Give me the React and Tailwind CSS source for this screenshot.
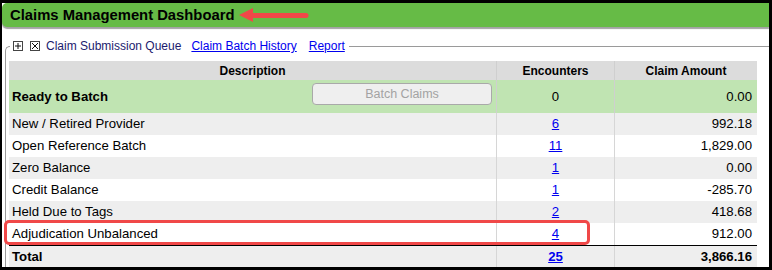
import React from "react";

const rows = [
  { label: "New / Retired Provider", count: "6", amount: "992.18", shade: true },
  { label: "Open Reference Batch", count: "11", amount: "1,829.00", shade: false },
  { label: "Zero Balance", count: "1", amount: "0.00", shade: true },
  { label: "Credit Balance", count: "1", amount: "-285.70", shade: false },
  { label: "Held Due to Tags", count: "2", amount: "418.68", shade: true },
  { label: "Adjudication Unbalanced", count: "4", amount: "912.00", shade: false },
];

const PlusBox = () => (
  <svg width="10" height="10" viewBox="0 0 10 10" className="shrink-0">
    <rect x="0.5" y="0.5" width="9" height="9" fill="white" stroke="#444" />
    <path d="M2 5h6M5 2v6" stroke="#111" strokeWidth="1" />
  </svg>
);

const CrossBox = () => (
  <svg width="10" height="10" viewBox="0 0 10 10" className="shrink-0">
    <rect x="0.5" y="0.5" width="9" height="9" fill="white" stroke="#444" />
    <path d="M2 2l6 6M8 2l-6 6" stroke="#111" strokeWidth="1" />
  </svg>
);

const Arrow = () => (
  <svg width="72" height="16" viewBox="0 0 72 16" className="ml-[4px] shrink-0">
    <path d="M1 8L15 1V15Z" fill="#f04848" />
    <path d="M13 8.5H68" stroke="#f04848" strokeWidth="5" strokeLinecap="round" />
  </svg>
);

export default function App() {
  return (
    <div className="w-[772px] h-[270px] overflow-hidden bg-white border-t-[3px] border-l-2 border-r-[3px] border-b-[3px] border-black font-['Liberation_Sans',Arial,sans-serif] text-black">
      <div className="h-[24px] bg-[#66bb46] rounded-l-[5px] shadow-[0_2px_1px_#a3a3a3] flex items-center pl-2">
        <h1 className="text-[14.8px] font-bold leading-none">Claims Management Dashboard</h1>
        <Arrow />
      </div>

      <fieldset className="mt-[12px] ml-[3px] min-w-0 border-t border-l border-[#9a9a9a] rounded-tl-[5px]">
        <legend className="ml-[4px] pl-[3px] pr-[4px]">
          <span className="flex items-center h-[14px] text-[12px] leading-none">
            <PlusBox />
            <span className="ml-[7px]">
              <CrossBox />
            </span>
            <span className="ml-[6px] text-[#1b1b6e]">Claim Submission Queue</span>
            <a href="#" className="ml-[10px] text-[#0000ee] underline">
              Claim Batch History
            </a>
            <a href="#" className="ml-[12px] text-[#0000ee] underline">
              Report
            </a>
          </span>
        </legend>

        <div className="relative mt-[8px] ml-[3px] w-[748px] text-[13.2px]">
          <div className="grid grid-cols-[487px_118px_143px] h-[19px] bg-[#dcdcdc] text-[12px] font-bold">
            <div className="flex items-center justify-center">Description</div>
            <div className="flex items-center justify-center border-l border-[#cfcfcf]">Encounters</div>
            <div className="flex items-center justify-center border-l border-[#cfcfcf]">Claim Amount</div>
          </div>

          <div className="grid grid-cols-[487px_118px_143px] h-[33px] bg-[#c0e4b2]">
            <div className="flex items-center justify-between pl-[3px] pr-[4px]">
              <span className="font-bold">Ready to Batch</span>
              <button
                disabled
                className="w-[180px] h-[22px] mb-[5px] rounded-[4px] border border-[#a9a9a9] bg-[#efefef] text-[12.5px] text-[#a3a3a3]"
              >
                Batch Claims
              </button>
            </div>
            <div className="flex items-center justify-center border-l border-[#cfcfcf]">0</div>
            <div className="flex items-center justify-end pr-[5px] border-l border-[#cfcfcf]">0.00</div>
          </div>

          {rows.map((r) => (
            <div
              key={r.label}
              className={`grid grid-cols-[487px_118px_143px] h-[22px] ${r.shade ? "bg-[#eeeeee]" : "bg-white"}`}
            >
              <div className="flex items-center pl-[3px]">{r.label}</div>
              <div className="flex items-center justify-center border-l border-[#d6d6d6]">
                <a href="#" className="text-[#0000ee] underline">
                  {r.count}
                </a>
              </div>
              <div className="flex items-center justify-end pr-[5px] border-l border-[#d6d6d6]">{r.amount}</div>
            </div>
          ))}

          <div className="grid grid-cols-[487px_118px_143px] h-[22px] bg-[#eeeeee] border-t border-black font-bold">
            <div className="flex items-center pl-[3px]">Total</div>
            <div className="flex items-center justify-center border-l border-[#d6d6d6]">
              <a href="#" className="text-[#0000ee] underline">
                25
              </a>
            </div>
            <div className="flex items-center justify-end pr-[5px] border-l border-[#d6d6d6]">3,866.16</div>
          </div>

          <div className="absolute left-[-5px] top-[159px] w-[586px] h-[25px] border-[3px] border-[#f04848] rounded-[5px] pointer-events-none" />
        </div>
      </fieldset>
    </div>
  );
}
